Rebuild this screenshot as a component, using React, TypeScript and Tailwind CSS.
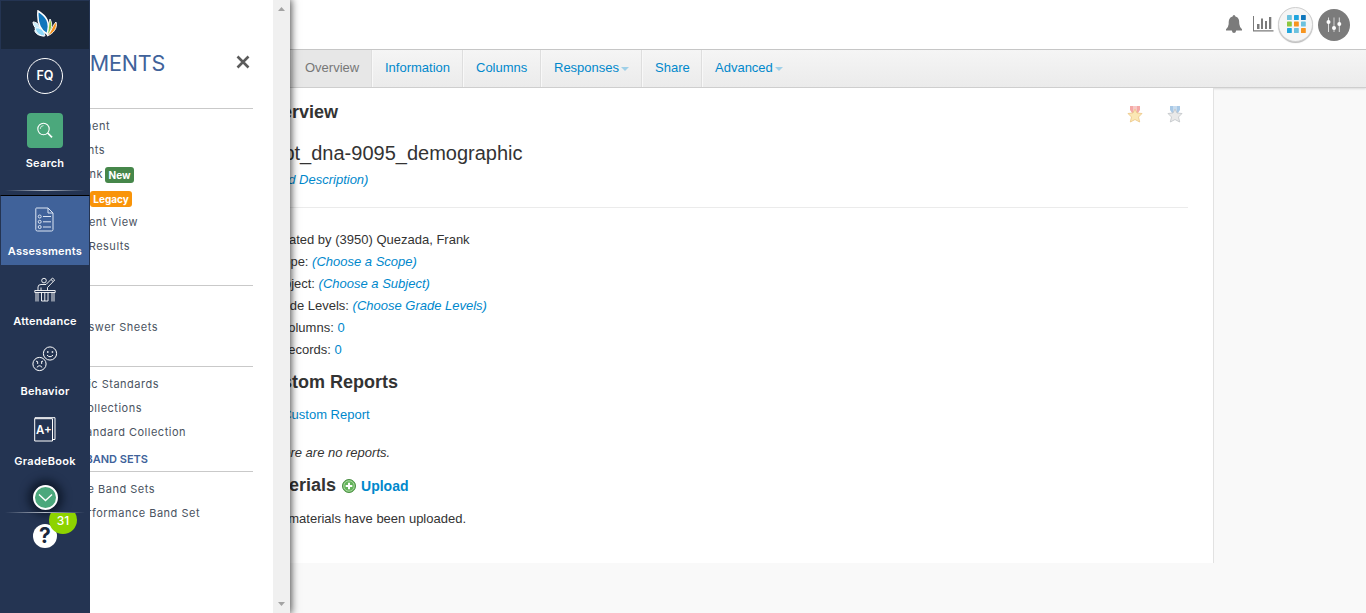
import type { ReactNode } from "react";

const sans = "font-['Liberation_Sans',Arial,sans-serif]";
const menuFont = "font-['Inter','Open_Sans',sans-serif]";

function Butterfly() {
  return (
    <svg width="26" height="28" viewBox="0 0 26 28">
      <path d="M1 12 C5 12 8 15 9 22 L12 26 C4 26 1 20 4 19 C3 17 1 15 1 12Z" fill="#c9edfb" stroke="#fff" strokeWidth="1" />
      <path d="M6 1 C14 6 19 12 15 24 C8 20 5 12 6 1Z" fill="#0e76bc" stroke="#fff" strokeWidth="1.5" />
      <path d="M3 18 C8 17 12 20 13 26 C8 26 4 23 3 18Z" fill="#8ed8f8" stroke="#fff" strokeWidth=".9" />
      <path d="M18 9 C21 14 20 21 15 25 C17 20 16 15 18 9Z" fill="#8cc63f" stroke="#fff" strokeWidth=".9" />
      <path d="M24 12 C26 18 21 24 15 26 C20 21 20 16 24 12Z" fill="#f7941e" stroke="#fff" strokeWidth=".9" />
    </svg>
  );
}

function SearchIcon() {
  return (
    <svg width="18" height="18" viewBox="0 0 18 18" fill="none" stroke="#fff">
      <circle cx="7.5" cy="7" r="5.7" strokeWidth="1.1" />
      <path d="M4.2 7 A3.4 3.4 0 0 1 7.5 3.6" strokeWidth=".7" />
      <path d="M11.7 11 L16 15.3" strokeWidth="1.7" />
    </svg>
  );
}

function AssessIcon() {
  return (
    <svg className="-ml-[2px]" width="19" height="25" viewBox="0 0 19 25" fill="none" stroke="#dce5f3" strokeWidth="1">
      <path d="M1.5 1 H13 L18 6 V22.5 Q18 24 16.5 24 H2.5 Q.8 24 .8 22.5 V1.8 Q.8 1 1.5 1Z M13 1 V6 H18" />
      <circle cx="4.7" cy="9.5" r="1.5" />
      <circle cx="4.7" cy="14.8" r="1.5" />
      <circle cx="4.7" cy="20" r="1.5" />
      <path d="M8 9.5 H16 M8 14.8 H16 M8 20 H16" />
    </svg>
  );
}

function AttendIcon() {
  return (
    <svg width="22" height="25" viewBox="0 0 22 25" fill="none" stroke="#fff" strokeWidth=".9">
      <circle cx="10" cy="3.6" r="2.3" />
      <path d="M4 13.5 V10 Q4 7.5 7 7.5 H12 L18.5 1 L20.7 3 L13.5 10.5 V13.5 M7 10.5 V13.5 M17 2.5 L19.2 4.5" />
      <path d="M.8 13.5 H21.2 V15.5 H.8Z M2 15.5 V24.5 M4 15.5 V24.5 M18 15.5 V24.5 M20 15.5 V24.5 M7.5 15.5 V24 H14 V15.5 M10.8 15.5 V24" />
    </svg>
  );
}

function BehaviorIcon() {
  return (
    <svg width="26" height="26" viewBox="0 0 26 26" fill="none" stroke="#fff" strokeWidth="1">
      <circle cx="18" cy="7.5" r="6.6" />
      <circle cx="7.5" cy="18" r="6.6" />
      <path d="M15 9 Q18 12.5 21 9 M4.8 21.5 Q7.5 18 10.2 21.5 M4 15 L6 16 M11 15 L9 16" />
      <path d="M15 6 H16.5 M19.7 6 H21.2 M5 17 H6.2 M9 17 H10.2" strokeWidth="1.4" />
    </svg>
  );
}

function GradeIcon() {
  return (
    <svg width="22" height="25" viewBox="0 0 22 25" fill="none" stroke="#fff" strokeWidth="1">
      <path d="M.7 1.7 H18.5 V24 H.7Z M1 1.7 V.7 H21 V22.5 H18.5" />
      <text x="9.8" y="17" fill="#fff" stroke="none" fontSize="11.5" fontWeight="600" textAnchor="middle" fontFamily="Inter, sans-serif">A+</text>
    </svg>
  );
}

function SideItem({ label, icon, active = false }: { label: string; icon: ReactNode; active?: boolean }) {
  return (
    <div className={active ? "h-[70px] bg-[#40629a] border-x border-t border-[#243452] border-t-black flex flex-col items-center" : "h-[70px] flex flex-col items-center"}>
      <div className={active ? "h-[47px] flex items-center justify-center" : "h-[48px] flex items-center justify-center"}>{icon}</div>
      <div className="text-[11px] leading-[16px] font-semibold tracking-[0.25px] text-white">{label}</div>
    </div>
  );
}

function Rule() {
  return <div className="h-px mx-[5px] shrink-0 bg-linear-to-r from-transparent via-[#b5bcc8] to-transparent" />;
}

function Sidebar() {
  return (
    <aside className={`w-[90px] shrink-0 bg-[#243452] text-white flex flex-col ${menuFont}`}>
      <div className="h-[49px] bg-[#1b283c] border-t border-x border-[#243452] flex items-center justify-center pb-[2px]">
        <Butterfly />
      </div>
      <div className="mt-[9px] size-[36px] self-center rounded-full border border-white flex items-center justify-center text-[12.5px] font-semibold">FQ</div>
      <div className="mt-[19px] w-[36px] h-[35px] self-center rounded-[4px] bg-[#4ba87c] flex items-center justify-center"><SearchIcon /></div>
      <div className="mt-[7px] h-[16px] text-center text-[11px] leading-[16px] font-semibold tracking-[0.2px]">Search</div>
      <div className="h-[19px] shrink-0" />
      <Rule />
      <div className="h-[4px] shrink-0" />
      <SideItem active label="Assessments" icon={<AssessIcon />} />
      <SideItem label="Attendance" icon={<AttendIcon />} />
      <SideItem label="Behavior" icon={<BehaviorIcon />} />
      <SideItem label="GradeBook" icon={<GradeIcon />} />
      <div className="h-[37px] flex justify-center pt-[10px]">
        <div className="size-[25px] rounded-full border-2 border-white bg-[#4ba87c] shadow-[0_0_9px_5px_rgba(5,12,25,0.65)] flex items-center justify-center">
          <svg width="15" height="9" viewBox="0 0 15 9" fill="none" stroke="#fff" strokeWidth="1.4"><path d="M1 1.5 L7.5 7.5 L14 1.5" /></svg>
        </div>
      </div>
      <Rule />
      <div className="relative h-[40px] overflow-hidden">
        <div className="absolute left-[33px] top-[11px] size-[24px] rounded-full bg-white flex items-center justify-center text-[21px] font-bold text-[#1b283c]">?</div>
        <div className="absolute left-[49px] top-[-7px] w-[28px] h-[28px] rounded-full bg-[#8ed300] flex items-center justify-center text-[12px] font-medium pt-[2px]">31</div>
      </div>
    </aside>
  );
}

function Row({ w, children }: { w: string; children: ReactNode }) {
  return (
    <div className={`h-[24px] ${w} overflow-hidden flex justify-end items-center whitespace-nowrap text-[11px] tracking-[0.5px] text-[#4a5361]`}>
      <span className="shrink-0">{children}</span>
    </div>
  );
}

function Drawer() {
  return (
    <div className={`w-[200px] shrink-0 bg-white flex ${menuFont}`}>
      <div className="w-[183px]">
        <div className="w-[163px] h-[109px] border-b border-[#c9c9c9] flex justify-between pt-[46px]">
          <div className="w-[75px] h-[34px] overflow-hidden flex justify-end">
            <span className="shrink-0 text-[21.5px] leading-[34px] text-[#40629a] tracking-[-0.2px]">MENTS</span>
          </div>
          <svg className="mt-[9px] mr-[3px]" width="14" height="14" viewBox="0 0 14 14" stroke="#5b5b5b" strokeWidth="2.6"><path d="M1.5 1.5 L12.5 12.5 M12.5 1.5 L1.5 12.5" /></svg>
        </div>
        <div className="h-[176px] pt-[5px]">
          <Row w="w-[20px]">ment</Row>
          <Row w="w-[15px]">nts</Row>
          <div className="flex items-center">
            <Row w="w-[13px]">nk</Row>
            <span className="ml-[2px] mt-px h-[16px] w-[29px] rounded-[3px] bg-[#46874a] text-white text-[10px] leading-[16px] text-center font-bold">New</span>
          </div>
          <div className="h-[24px] flex items-center">
            <span className="mt-px h-[16px] w-[42px] rounded-[3px] bg-[#f99409] text-white text-[10px] leading-[16px] text-center font-bold">Legacy</span>
          </div>
          <Row w="w-[48px]">ment View</Row>
          <Row w="w-[40px]">Results</Row>
        </div>
        <div className="w-[163px] h-[82px] border-y border-[#c9c9c9] pt-[29px]">
          <Row w="w-[68px]">nswer Sheets</Row>
        </div>
        <div className="w-[163px] h-[105px] pt-[5px] border-b border-[#c9c9c9]">
          <Row w="w-[69px]">ic Standards</Row>
          <Row w="w-[52px]">Collections</Row>
          <Row w="w-[96px]">tandard Collection</Row>
          <div className="h-[27px] pt-[7px] w-[58px] overflow-hidden flex justify-end whitespace-nowrap text-[11px] leading-[17px] font-semibold text-[#40629a]"><span className="shrink-0">BAND SETS</span></div>
        </div>
        <div className="pt-[5px]">
          <Row w="w-[65px]">e Band Sets</Row>
          <Row w="w-[110px]">erformance Band Set</Row>
        </div>
      </div>
      <div className="w-[17px] bg-[#f0f0f0] flex flex-col items-center justify-between pt-[7px] pb-[7px]">
        <svg width="7" height="4" viewBox="0 0 7 4" fill="#a3a3a3"><path d="M0 4 L3.5 0 L7 4Z" /></svg>
        <svg width="7" height="4" viewBox="0 0 7 4" fill="#a3a3a3"><path d="M0 0 L3.5 4 L7 0Z" /></svg>
      </div>
    </div>
  );
}

function Caret() {
  return <svg className="ml-[2px] mt-[3px]" width="8" height="4" viewBox="0 0 8 4" fill="#9fd0e8"><path d="M0 0 H8 L4 4Z" /></svg>;
}

function Tab({ w, label, caret = false }: { w: string; label: string; caret?: boolean }) {
  return (
    <div className={`${w} h-full border-l border-[#dedede] shadow-[inset_1px_0_0_#f8f8f8] flex items-center pl-[13px] pb-[2px] text-[#0088cc]`}>
      {label}
      {caret && <Caret />}
    </div>
  );
}

function Medal({ ribbon, star, line }: { ribbon: string; star: string; line: string }) {
  return (
    <svg width="16" height="17" viewBox="0 0 16 17">
      <path d="M3 0 H13 V4 L11 7 H5 L3 4Z" fill={ribbon} />
      <path d="M6 0 H10 V5 H6Z" fill="#fff" opacity=".35" />
      <path d="M8 3 L10 7 L15 7.5 L11.5 11 L12.7 16 L8 13.5 L3.3 16 L4.5 11 L1 7.5 L6 7Z" fill={star} stroke={line} strokeWidth=".9" />
    </svg>
  );
}

const tiles = ["#6cc1dd", "#1fa5de", "#0e76bc", "#8cc63f", "#f7941e", "#6cc1dd", "#1fa5de", "#6cc1dd", "#f7941e"];

function HeaderIcons() {
  return (
    <div className="flex items-center">
      <svg className="-mt-[2px]" width="16" height="18" viewBox="0 0 16 18" fill="#7b7b7b"><path d="M8 0 Q9.3 0 9.4 1.5 C13 2.5 13.3 5.5 13.3 9 Q13.5 12 16 14.2 V15.4 H0 V14.2 Q2.5 12 2.7 9 C2.7 5.5 3 2.5 6.6 1.5 Q6.7 0 8 0Z M5.8 15.4 H10.2 Q9.8 18 8 18 Q6.2 18 5.8 15.4Z" /></svg>
      <svg className="ml-[11px] -mt-[2px]" width="21" height="16" viewBox="0 0 21 16" fill="#7b7b7b"><path d="M0 0 H1 V14.2 H20.5 V15.4 H0Z M4 8 H6.5 V13 H4Z M8 2.5 H10 V13 H8Z M12 5 H14 V13 H12Z M16 1 H18.3 V13 H16Z" /></svg>
      <div className="ml-[4px] size-[35px] rounded-full bg-[#f5f5f5] border border-[#cfcfcf] shadow-[0_1px_1px_#bbb] flex items-center justify-center">
        <svg className="ml-px" width="19" height="19" viewBox="0 0 19 19">
          {tiles.map((c, i) => <rect key={i} x={(i % 3) * 7} y={Math.floor(i / 3) * 6.5} width="4.8" height="5" rx=".6" fill={c} />)}
        </svg>
      </div>
      <div className="ml-[5px] size-[32px] rounded-full bg-[#7b7b7b] flex items-center justify-center">
        <svg width="16" height="16" viewBox="0 0 16 16" fill="#fff"><path d="M2 .5 H3 V15 H2Z M12.8 .5 H13.8 V15 H12.8Z" opacity=".75" /><path d="M7.2 .5 H8.8 V15 H7.2Z" opacity=".4" /><circle cx="2.5" cy="5" r="2" /><circle cx="8" cy="11" r="2" /><circle cx="13.3" cy="7" r="2" /></svg>
      </div>
    </div>
  );
}

const link = "text-[#0088cc]";

export default function App() {
  return (
    <div className={`relative w-[1366px] h-[613px] overflow-hidden bg-[#f9f9f9] text-[13px] text-[#333] ${sans}`}>
      <header className="h-[50px] bg-white border-b border-[#c8c8c8] flex justify-end items-center pr-[16px]">
        <HeaderIcons />
      </header>
      <nav className="h-[38px] bg-linear-to-b from-[#f5f5f5] to-[#ebebeb] border-b border-[#cecece] shadow-[0_1px_2px_rgba(0,0,0,0.12)] flex pl-[292px]">
        <div className="w-[79px] h-full bg-[#e7e7e7] flex items-center pl-[13px] pb-[2px] text-[#777]">Overview</div>
        <Tab w="w-[91px]" label="Information" />
        <Tab w="w-[78px]" label="Columns" />
        <Tab w="w-[101px]" label="Responses" caret />
        <Tab w="w-[60px]" label="Share" />
        <Tab w="w-[100px]" label="Advanced" caret />
      </nav>
      <main className="ml-[90px] w-[1124px] h-[475px] bg-white border-r border-[#e2e2e2] pl-[168px] pr-[25px] pt-[12px]">
        <div className="flex justify-between">
          <h1 className="text-[18px] leading-[24px] font-bold">Overview</h1>
          <div className="flex gap-[24px] pt-[6px] pr-[5px]">
            <Medal ribbon="#f4a9a6" star="#fbe7b4" line="#edc98c" />
            <Medal ribbon="#a9c9e6" star="#e9e9e9" line="#c5c8cc" />
          </div>
        </div>
        <div className="pl-[10px]">
          <h2 className="mt-[16px] pl-[1px] text-[20px] leading-[26px]">Rpt_dna-9095_demographic</h2>
          <div className={`mt-[3px] leading-[22px] italic ${link}`}>(Add Description)</div>
          <div className="mt-[16px] h-px bg-[#ebebeb]" />
          <div className="mt-[21px] leading-[22px]">
            <div>Created by (3950) Quezada, Frank</div>
            <div>Scope: <i className={link}>(Choose a Scope)</i></div>
            <div>Subject: <i className={link}>(Choose a Subject)</i></div>
            <div>Grade Levels: <i className={link}>(Choose Grade Levels)</i></div>
            <div># Columns: <span className={link}>0</span></div>
            <div># Records: <span className={link}>0</span></div>
          </div>
        </div>
        <h3 className="mt-[9px] text-[18px] leading-[24px] font-bold">Custom Reports</h3>
        <div className={`mt-[10px] pl-[13px] leading-[22px] ${link}`}>+ Custom Report</div>
        <div className="mt-[16px] pl-[10px] leading-[22px] italic">There are no reports.</div>
        <div className="mt-[9px] h-[24px] flex items-center">
          <h3 className="text-[18px] leading-[24px] font-bold">Materials</h3>
          <svg className="ml-[6px] mt-[2px]" width="14" height="14" viewBox="0 0 14 14"><circle cx="7" cy="7" r="6.5" fill="#65b35b" stroke="#4b8f43" /><circle cx="7" cy="7" r="5.2" fill="none" stroke="#a6d99d" /><path d="M7 3.7 V10.3 M3.7 7 H10.3" stroke="#fff" strokeWidth="2" /></svg>
          <span className={`ml-[5px] mt-[2px] text-[14px] font-bold ${link}`}>Upload</span>
        </div>
        <div className="mt-[11px] pl-[10px] leading-[22px]">No materials have been uploaded.</div>
      </main>
      <div className="absolute left-0 top-0 h-[613px] w-[290px] flex shadow-[0_0_8px_1px_rgba(0,0,0,0.75)]">
        <Sidebar />
        <Drawer />
      </div>
    </div>
  );
}
